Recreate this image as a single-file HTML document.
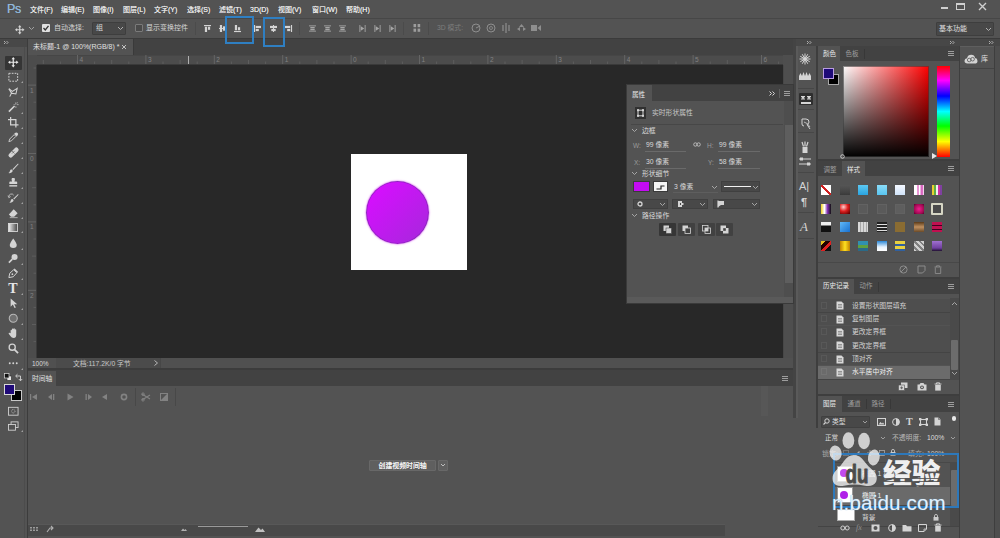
<!DOCTYPE html>
<html lang="zh-CN"><head><meta charset="utf-8"><title>Photoshop</title>
<style>
*{box-sizing:border-box;margin:0;padding:0}
html,body{width:1000px;height:538px;overflow:hidden;background:#535353}
body{position:relative;font-family:"Liberation Sans","Noto Sans CJK SC",sans-serif;font-size:8px;color:#dcdcdc;line-height:1}
.a{position:absolute}
.t{position:absolute;white-space:nowrap;font-size:8px;line-height:10px;color:#d6d6d6}
svg{position:absolute;overflow:visible}
</style></head><body>

<div class="a" style="left:0px;top:0px;width:1000px;height:19px;background:#535353;"></div>
<div class="t" style="left:7px;top:1.7px;font-size:12.5px;color:#8fb5d9;line-height:14px;letter-spacing:-0.3px;text-shadow:0 0 .5px #8fb5d9">Ps</div>
<div class="t" style="left:30px;top:5.4px;font-size:7px;color:#e8e8e8;text-shadow:0 0 .4px #ddd">文件(F)</div>
<div class="t" style="left:61px;top:5.4px;font-size:7px;color:#e8e8e8;text-shadow:0 0 .4px #ddd">编辑(E)</div>
<div class="t" style="left:93px;top:5.4px;font-size:7px;color:#e8e8e8;text-shadow:0 0 .4px #ddd">图像(I)</div>
<div class="t" style="left:123px;top:5.4px;font-size:7px;color:#e8e8e8;text-shadow:0 0 .4px #ddd">图层(L)</div>
<div class="t" style="left:154px;top:5.4px;font-size:7px;color:#e8e8e8;text-shadow:0 0 .4px #ddd">文字(Y)</div>
<div class="t" style="left:187px;top:5.4px;font-size:7px;color:#e8e8e8;text-shadow:0 0 .4px #ddd">选择(S)</div>
<div class="t" style="left:219px;top:5.4px;font-size:7px;color:#e8e8e8;text-shadow:0 0 .4px #ddd">滤镜(T)</div>
<div class="t" style="left:250px;top:5.4px;font-size:7px;color:#e8e8e8;text-shadow:0 0 .4px #ddd">3D(D)</div>
<div class="t" style="left:278px;top:5.4px;font-size:7px;color:#e8e8e8;text-shadow:0 0 .4px #ddd">视图(V)</div>
<div class="t" style="left:312px;top:5.4px;font-size:7px;color:#e8e8e8;text-shadow:0 0 .4px #ddd">窗口(W)</div>
<div class="t" style="left:346px;top:5.4px;font-size:7px;color:#e8e8e8;text-shadow:0 0 .4px #ddd">帮助(H)</div>
<div class="a" style="left:941px;top:7px;width:7px;height:2px;background:#cfcfcf;"></div>
<div class="a" style="left:956px;top:3px;width:9px;height:7px;background:transparent;border:1px solid #cfcfcf;border-top-width:2px;height:6.5px"></div>
<svg style="left:978px;top:2px;" width="9" height="9" viewBox="0 0 9 9"><path d="M1 1L8 8M8 1L1 8" stroke="#cfcfcf" stroke-width="1.4"/></svg>
<div class="a" style="left:0px;top:18px;width:1000px;height:1px;background:#474747;"></div>
<div class="a" style="left:0px;top:19px;width:1000px;height:19px;background:#535353;"></div>
<div class="a" style="left:0px;top:38px;width:1000px;height:1px;background:#3b3b3b;"></div>
<svg style="left:14.5px;top:24.5px" width="9.5" height="9.5" viewBox="0 0 11 11"><path d="M5.5 0L7.5 2.5H6.2V4.8H8.5V3.5L11 5.5L8.5 7.5V6.2H6.2V8.5H7.5L5.5 11L3.5 8.5H4.8V6.2H2.5V7.5L0 5.5L2.5 3.5V4.8H4.8V2.5H3.5Z" fill="#d4d4d4"/></svg>
<svg style="left:29px;top:27px;" width="5" height="3" viewBox="0 0 5 3"><path d="M0 0L2.5 2.5L5 0" stroke="#a0a0a0" fill="none" stroke-width="1"/></svg>
<div class="a" style="left:42px;top:24px;width:8px;height:8px;background:#e0e0e0;border-radius:1px"></div>
<svg style="left:42px;top:24px;" width="8" height="8" viewBox="0 0 8 8"><path d="M1.5 4L3.3 6L6.5 1.8" stroke="#333" fill="none" stroke-width="1.3"/></svg>
<div class="t" style="left:54px;top:23px;font-size:7px;color:#d6d6d6;">自动选择:</div>
<div class="a" style="left:92px;top:22px;width:34px;height:13px;background:#484848;border:1px solid #3e3e3e;border-radius:1px"></div>
<div class="t" style="left:96px;top:23px;font-size:7px;color:#d6d6d6;">组</div>
<svg style="left:118px;top:27px;" width="5" height="3" viewBox="0 0 5 3"><path d="M0 0L2.5 2.5L5 0" stroke="#b0b0b0" fill="none" stroke-width="1"/></svg>
<div class="a" style="left:135px;top:24px;width:8px;height:8px;background:#4a4a4a;border:1px solid #7a7a7a;border-radius:1px"></div>
<div class="t" style="left:146px;top:23px;font-size:7px;color:#d6d6d6;">显示变换控件</div>
<div class="a" style="left:195px;top:22px;width:1px;height:13px;background:#4b4b4b;"></div>
<svg style="left:203.5px;top:25px" width="7" height="7" viewBox="0 0 8 8"><rect x="0" y="0" width="8" height="1.3" fill="#d4d4d4"/><rect x="1" y="2" width="2.5" height="6" fill="#d4d4d4"/><rect x="4.5" y="2" width="2.5" height="3.5" fill="#d4d4d4"/></svg>
<svg style="left:218.5px;top:25px" width="7" height="7" viewBox="0 0 8 8"><rect x="0" y="3.4" width="8" height="1.2" fill="#d4d4d4"/><rect x="1" y="0" width="2.5" height="8" fill="#d4d4d4"/><rect x="4.5" y="1.5" width="2.5" height="5" fill="#d4d4d4"/></svg>
<svg style="left:233.5px;top:25px" width="7" height="7" viewBox="0 0 8 8"><rect x="0" y="6.8" width="8" height="1.3" fill="#d4d4d4"/><rect x="1" y="0" width="2.5" height="6" fill="#d4d4d4"/><rect x="4.5" y="2.5" width="2.5" height="3.5" fill="#d4d4d4"/></svg>
<svg style="left:253.5px;top:25px" width="7" height="7" viewBox="0 0 8 8"><rect x="0" y="0" width="1.3" height="8" fill="#d4d4d4"/><rect x="2" y="1" width="6" height="2.5" fill="#d4d4d4"/><rect x="2" y="4.5" width="3.5" height="2.5" fill="#d4d4d4"/></svg>
<svg style="left:269.5px;top:25px" width="7" height="7" viewBox="0 0 8 8"><rect x="3.4" y="0" width="1.2" height="8" fill="#d4d4d4"/><rect x="0" y="1" width="8" height="2.5" fill="#d4d4d4"/><rect x="1.5" y="4.5" width="5" height="2.5" fill="#d4d4d4"/></svg>
<svg style="left:284.5px;top:25px" width="7" height="7" viewBox="0 0 8 8"><rect x="6.8" y="0" width="1.3" height="8" fill="#d4d4d4"/><rect x="0" y="1" width="6" height="2.5" fill="#d4d4d4"/><rect x="2.5" y="4.5" width="3.5" height="2.5" fill="#d4d4d4"/></svg>
<div class="a" style="left:299px;top:22px;width:1px;height:13px;background:#4b4b4b;"></div>
<svg style="left:308.5px;top:25px" width="7" height="7" viewBox="0 0 8 8"><rect x="0" y="0.5" width="8" height="1" fill="#a6a6a6"/><rect x="0" y="6.5" width="8" height="1" fill="#a6a6a6"/><rect x="1.5" y="2.2" width="5" height="1.6" fill="#a6a6a6"/><rect x="1.5" y="4.4" width="5" height="1.6" fill="#a6a6a6"/></svg>
<svg style="left:323.5px;top:25px" width="7" height="7" viewBox="0 0 8 8"><rect x="0" y="0.5" width="8" height="1" fill="#a6a6a6"/><rect x="0" y="6.5" width="8" height="1" fill="#a6a6a6"/><rect x="1.5" y="2.2" width="5" height="1.6" fill="#a6a6a6"/><rect x="1.5" y="4.4" width="5" height="1.6" fill="#a6a6a6"/></svg>
<svg style="left:338.5px;top:25px" width="7" height="7" viewBox="0 0 8 8"><rect x="0" y="0.5" width="8" height="1" fill="#a6a6a6"/><rect x="0" y="6.5" width="8" height="1" fill="#a6a6a6"/><rect x="1.5" y="2.2" width="5" height="1.6" fill="#a6a6a6"/><rect x="1.5" y="4.4" width="5" height="1.6" fill="#a6a6a6"/></svg>
<svg style="left:358.5px;top:25px" width="7" height="7" viewBox="0 0 8 8"><rect x="0.5" y="0" width="1" height="8" fill="#a6a6a6"/><rect x="6.5" y="0" width="1" height="8" fill="#a6a6a6"/><path d="M2 1.5L6 4L2 6.5Z" fill="#a6a6a6"/></svg>
<svg style="left:373.5px;top:25px" width="7" height="7" viewBox="0 0 8 8"><rect x="0.5" y="0" width="1" height="8" fill="#a6a6a6"/><rect x="6.5" y="0" width="1" height="8" fill="#a6a6a6"/><path d="M2 1.5L6 4L2 6.5Z" fill="#a6a6a6"/></svg>
<svg style="left:388.5px;top:25px" width="7" height="7" viewBox="0 0 8 8"><rect x="0.5" y="0" width="1" height="8" fill="#a6a6a6"/><rect x="6.5" y="0" width="1" height="8" fill="#a6a6a6"/><path d="M2 1.5L6 4L2 6.5Z" fill="#a6a6a6"/></svg>
<div class="a" style="left:403px;top:22px;width:1px;height:13px;background:#4b4b4b;"></div>
<svg style="left:413px;top:24px;" width="8" height="8" viewBox="0 0 8 8"><rect x="0.5" y="0" width="2.6" height="3.2" fill="#9c9c9c"/><rect x="4.6" y="0" width="2.6" height="3.2" fill="#9c9c9c"/><rect x="0.5" y="4.6" width="2.6" height="3.2" fill="#9c9c9c"/><rect x="4.6" y="4.6" width="2.6" height="3.2" fill="#9c9c9c"/></svg>
<div class="a" style="left:428px;top:22px;width:1px;height:13px;background:#4b4b4b;"></div>
<div class="t" style="left:437px;top:23px;font-size:6.8px;color:#7d7d7d;">3D 模式:</div>
<svg style="left:471px;top:23px;" width="10" height="10" viewBox="0 0 10 10"><circle cx="5" cy="5" r="4" fill="none" stroke="#8e8e8e" stroke-width="1"/><path d="M5 5L9 3" stroke="#8e8e8e" stroke-width="1"/></svg>
<svg style="left:486px;top:23px;" width="10" height="10" viewBox="0 0 10 10"><circle cx="5" cy="5" r="4" fill="none" stroke="#8e8e8e" stroke-width="1"/><circle cx="5" cy="5" r="1.5" fill="none" stroke="#8e8e8e" stroke-width="0.8"/></svg>
<svg style="left:501px;top:23px;" width="10" height="10" viewBox="0 0 10 10"><path d="M5 0V10M2 2V8M8 2V8" stroke="#8e8e8e" stroke-width="1.2"/></svg>
<svg style="left:516px;top:23px;" width="11" height="10" viewBox="0 0 11 10"><path d="M5.5 1L8 4H3ZM1 6L4 4V8ZM10 6L7 4V8Z" fill="#8e8e8e"/></svg>
<svg style="left:531px;top:24px;" width="10" height="8" viewBox="0 0 10 8"><rect x="0" y="1" width="6" height="6" fill="#8e8e8e"/><path d="M6.5 4L10 1V7Z" fill="#8e8e8e"/></svg>
<div class="a" style="left:936px;top:22px;width:58px;height:14px;background:#484848;border:1px solid #3e3e3e;border-radius:1px"></div>
<div class="t" style="left:939px;top:24px;font-size:7px;color:#e0e0e0;">基本功能</div>
<svg style="left:986px;top:28px;" width="5" height="3" viewBox="0 0 5 3"><path d="M0 0L2.5 2.5L5 0" stroke="#b0b0b0" fill="none" stroke-width="1"/></svg>
<div class="a" style="left:224.5px;top:16px;width:29px;height:27.5px;background:transparent;border:2px solid #2f7fc2;z-index:50"></div>
<div class="a" style="left:263px;top:17px;width:21.5px;height:29.5px;background:transparent;border:2px solid #2f7fc2;z-index:50"></div><div class="a" style="left:28px;top:39px;width:766px;height:16px;background:#424242;"></div>
<div class="a" style="left:28px;top:39px;width:105px;height:16px;background:#535353;"></div>
<div class="a" style="left:133px;top:39px;width:1px;height:16px;background:#3a3a3a;"></div>
<div class="t" style="left:33px;top:42px;font-size:7px;color:#e0e0e0;">未标题-1 @ 100%(RGB/8) *</div>
<svg style="left:122px;top:45px;" width="4" height="4" viewBox="0 0 4 4"><path d="M0 0L4 4M4 0L0 4" stroke="#c0c0c0" stroke-width="1"/></svg>
<div class="a" style="left:28px;top:55px;width:766px;height:10px;background:#4c4c4c;"></div>
<div class="a" style="left:28px;top:55px;width:766px;height:1px;background:#464646;"></div>
<div class="a" style="left:28px;top:64px;width:766px;height:1px;background:#3a3a3a;"></div>
<div class="a" style="left:28px;top:55px;width:9px;height:303px;background:#4c4c4c;"></div>
<div class="a" style="left:36px;top:65px;width:1px;height:293px;background:#3a3a3a;"></div>
<svg style="left:28px;top:55px;font-family:'Liberation Sans',sans-serif" width="766" height="10" viewBox="0 0 766 10"><rect x="14.8" y="5" width="1" height="4" fill="#5e5e5e"/><rect x="31.9" y="6.5" width="1" height="2.5" fill="#5e5e5e"/><rect x="49.0" y="0" width="1" height="9" fill="#656565"/><text x="51.5" y="6.5" font-size="6.5" fill="#828282">4</text><rect x="66.1" y="6.5" width="1" height="2.5" fill="#5e5e5e"/><rect x="83.2" y="5" width="1" height="4" fill="#5e5e5e"/><rect x="100.3" y="6.5" width="1" height="2.5" fill="#5e5e5e"/><rect x="117.4" y="0" width="1" height="9" fill="#656565"/><text x="119.9" y="6.5" font-size="6.5" fill="#828282">3</text><rect x="134.5" y="6.5" width="1" height="2.5" fill="#5e5e5e"/><rect x="151.6" y="5" width="1" height="4" fill="#5e5e5e"/><rect x="168.7" y="6.5" width="1" height="2.5" fill="#5e5e5e"/><rect x="185.8" y="0" width="1" height="9" fill="#656565"/><text x="188.3" y="6.5" font-size="6.5" fill="#828282">2</text><rect x="202.9" y="6.5" width="1" height="2.5" fill="#5e5e5e"/><rect x="220.0" y="5" width="1" height="4" fill="#5e5e5e"/><rect x="237.1" y="6.5" width="1" height="2.5" fill="#5e5e5e"/><rect x="254.2" y="0" width="1" height="9" fill="#656565"/><text x="256.7" y="6.5" font-size="6.5" fill="#828282">1</text><rect x="271.3" y="6.5" width="1" height="2.5" fill="#5e5e5e"/><rect x="288.4" y="5" width="1" height="4" fill="#5e5e5e"/><rect x="305.5" y="6.5" width="1" height="2.5" fill="#5e5e5e"/><rect x="322.6" y="0" width="1" height="9" fill="#656565"/><text x="325.1" y="6.5" font-size="6.5" fill="#828282">0</text><rect x="339.7" y="6.5" width="1" height="2.5" fill="#5e5e5e"/><rect x="356.8" y="5" width="1" height="4" fill="#5e5e5e"/><rect x="373.9" y="6.5" width="1" height="2.5" fill="#5e5e5e"/><rect x="391.0" y="0" width="1" height="9" fill="#656565"/><text x="393.5" y="6.5" font-size="6.5" fill="#828282">1</text><rect x="408.1" y="6.5" width="1" height="2.5" fill="#5e5e5e"/><rect x="425.2" y="5" width="1" height="4" fill="#5e5e5e"/><rect x="442.3" y="6.5" width="1" height="2.5" fill="#5e5e5e"/><rect x="459.4" y="0" width="1" height="9" fill="#656565"/><text x="461.9" y="6.5" font-size="6.5" fill="#828282">2</text><rect x="476.5" y="6.5" width="1" height="2.5" fill="#5e5e5e"/><rect x="493.6" y="5" width="1" height="4" fill="#5e5e5e"/><rect x="510.7" y="6.5" width="1" height="2.5" fill="#5e5e5e"/><rect x="527.8" y="0" width="1" height="9" fill="#656565"/><text x="530.3" y="6.5" font-size="6.5" fill="#828282">3</text><rect x="544.9" y="6.5" width="1" height="2.5" fill="#5e5e5e"/><rect x="562.0" y="5" width="1" height="4" fill="#5e5e5e"/><rect x="579.1" y="6.5" width="1" height="2.5" fill="#5e5e5e"/><rect x="596.2" y="0" width="1" height="9" fill="#656565"/><text x="598.7" y="6.5" font-size="6.5" fill="#828282">4</text><rect x="613.3" y="6.5" width="1" height="2.5" fill="#5e5e5e"/><rect x="630.4" y="5" width="1" height="4" fill="#5e5e5e"/><rect x="647.5" y="6.5" width="1" height="2.5" fill="#5e5e5e"/><rect x="664.6" y="0" width="1" height="9" fill="#656565"/><text x="667.1" y="6.5" font-size="6.5" fill="#828282">5</text><rect x="681.7" y="6.5" width="1" height="2.5" fill="#5e5e5e"/><rect x="698.8" y="5" width="1" height="4" fill="#5e5e5e"/><rect x="715.9" y="6.5" width="1" height="2.5" fill="#5e5e5e"/><rect x="733.0" y="0" width="1" height="9" fill="#656565"/><text x="735.5" y="6.5" font-size="6.5" fill="#828282">6</text><rect x="750.1" y="6.5" width="1" height="2.5" fill="#5e5e5e"/></svg>
<div class="a" style="left:188px;top:56px;width:1px;height:8px;background:#b0b0b0;"></div>
<svg style="left:28px;top:55px;font-family:'Liberation Sans',sans-serif" width="9" height="303" viewBox="0 0 9 303"><rect x="5.5" y="12.5" width="2.5" height="1" fill="#5e5e5e"/><rect x="0" y="29.6" width="8" height="1" fill="#656565"/><text x="2" y="37.6" font-size="6.5" fill="#828282">1</text><rect x="5.5" y="46.7" width="2.5" height="1" fill="#5e5e5e"/><rect x="4" y="63.8" width="4" height="1" fill="#5e5e5e"/><rect x="5.5" y="80.9" width="2.5" height="1" fill="#5e5e5e"/><rect x="0" y="98.0" width="8" height="1" fill="#656565"/><text x="2" y="106.0" font-size="6.5" fill="#828282">0</text><rect x="5.5" y="115.1" width="2.5" height="1" fill="#5e5e5e"/><rect x="4" y="132.2" width="4" height="1" fill="#5e5e5e"/><rect x="5.5" y="149.3" width="2.5" height="1" fill="#5e5e5e"/><rect x="0" y="166.4" width="8" height="1" fill="#656565"/><text x="2" y="174.4" font-size="6.5" fill="#828282">1</text><rect x="5.5" y="183.5" width="2.5" height="1" fill="#5e5e5e"/><rect x="4" y="200.6" width="4" height="1" fill="#5e5e5e"/><rect x="5.5" y="217.7" width="2.5" height="1" fill="#5e5e5e"/><rect x="0" y="234.8" width="8" height="1" fill="#656565"/><text x="2" y="242.8" font-size="6.5" fill="#828282">2</text><rect x="5.5" y="251.9" width="2.5" height="1" fill="#5e5e5e"/><rect x="4" y="269.0" width="4" height="1" fill="#5e5e5e"/><rect x="5.5" y="286.1" width="2.5" height="1" fill="#5e5e5e"/></svg>
<div class="a" style="left:37px;top:65px;width:746px;height:293px;background:#282828;"></div>
<div class="a" style="left:351px;top:153.5px;width:116px;height:116px;background:#ffffff;"></div>
<div class="a" style="left:365.8px;top:180.8px;width:63.5px;height:63.5px;background:linear-gradient(135deg,#d40ffd 15%,#ac25e0 88%);border-radius:50%;border:1px solid rgba(120,35,170,.6);box-shadow:0 0 1.5px 0.5px rgba(225,120,245,.9)"></div>
<div class="a" style="left:783px;top:55px;width:11px;height:303px;background:#4e4e4e;"></div>
<div class="a" style="left:783px;top:65px;width:1px;height:293px;background:#474747;"></div>
<div class="a" style="left:28px;top:358px;width:766px;height:10px;background:#505050;"></div>
<div class="a" style="left:56px;top:358px;width:104px;height:10px;background:#4b4b4b;"></div>
<div class="t" style="left:32px;top:359px;font-size:6.5px;color:#d8d8d8;">100%</div>
<div class="t" style="left:73px;top:359px;font-size:6.8px;color:#c8c8c8;">文档:117.2K/0 字节</div>
<svg style="left:154px;top:360px;" width="4" height="6" viewBox="0 0 4 6"><path d="M0.5 0.5L3.5 3L0.5 5.5" stroke="#b8b8b8" fill="none" stroke-width="1"/></svg>
<div class="a" style="left:160px;top:358px;width:1px;height:10px;background:#474747;"></div>
<div class="a" style="left:28px;top:368px;width:766px;height:18px;background:#424242;"></div>
<div class="a" style="left:28px;top:368px;width:766px;height:2px;background:#3c3c3c;"></div>
<div class="a" style="left:28px;top:370.5px;width:28px;height:16px;background:#535353;"></div>
<div class="t" style="left:32px;top:374px;font-size:6.8px;color:#e0e0e0;">时间轴</div>
<svg style="left:782px;top:376px;" width="6" height="5" viewBox="0 0 6 5"><path d="M0 0.5H6M0 2.5H6M0 4.5H6" stroke="#a8a8a8" stroke-width="0.9"/></svg>
<div class="a" style="left:28px;top:386px;width:766px;height:152px;background:#535353;"></div>
<div class="a" style="left:761px;top:386px;width:7px;height:30px;background:#575757;"></div>
<svg style="left:29px;top:392px;" width="10" height="10" viewBox="0 0 10 10"><rect x="1" y="2" width="1.2" height="6" fill="#828282"/><path d="M8 2L3 5L8 8Z" fill="#828282"/></svg>
<svg style="left:47px;top:392px;" width="10" height="10" viewBox="0 0 10 10"><path d="M5 2L1 5L5 8Z" fill="#828282"/><rect x="6" y="2" width="1.3" height="6" fill="#828282"/></svg>
<svg style="left:65px;top:392px;" width="10" height="10" viewBox="0 0 10 10"><path d="M2.5 1.5L8.5 5L2.5 8.5Z" fill="#828282"/></svg>
<svg style="left:83px;top:392px;" width="10" height="10" viewBox="0 0 10 10"><rect x="2.5" y="2" width="1.3" height="6" fill="#828282"/><path d="M5 2L9 5L5 8Z" fill="#828282"/></svg>
<svg style="left:100px;top:392px;" width="10" height="10" viewBox="0 0 10 10"><path d="M7 2L2 5L7 8Z" fill="#828282"/></svg>
<svg style="left:119px;top:392px;" width="10" height="10" viewBox="0 0 10 10"><circle cx="5" cy="5" r="2.6" fill="none" stroke="#828282" stroke-width="1.6"/></svg>
<div class="a" style="left:135px;top:388px;width:1px;height:18px;background:#484848;"></div>
<svg style="left:141px;top:392px;" width="10" height="10" viewBox="0 0 10 10"><path d="M1 2L9 7M1 8L9 3" stroke="#828282" stroke-width="1.1"/><circle cx="2" cy="2.2" r="1.3" fill="none" stroke="#828282" stroke-width="0.9"/><circle cx="2" cy="7.8" r="1.3" fill="none" stroke="#828282" stroke-width="0.9"/></svg>
<svg style="left:159px;top:392px;" width="10" height="10" viewBox="0 0 10 10"><rect x="1.5" y="1.5" width="7" height="7" fill="none" stroke="#828282" stroke-width="1"/><path d="M8.5 1.5V8.5H1.5Z" fill="#828282"/></svg>
<div class="a" style="left:175px;top:388px;width:1px;height:18px;background:#484848;"></div>
<div class="a" style="left:369px;top:460px;width:67px;height:11px;background:#5f5f5f;border:1px solid #686868;border-radius:1px"></div>
<div class="t" style="left:378.5px;top:461px;font-size:6.9px;color:#f6f6f6;text-shadow:0 0 .6px #fff">创建视频时间轴</div>
<div class="a" style="left:438px;top:460px;width:10px;height:11px;background:#5f5f5f;border:1px solid #686868;border-radius:1px"></div>
<svg style="left:441px;top:464px;" width="4" height="3" viewBox="0 0 4 3"><path d="M0 0L2 2L4 0" stroke="#c8c8c8" fill="none" stroke-width="0.9"/></svg>
<div class="a" style="left:28px;top:524px;width:697px;height:12px;background:#494949;"></div>
<div class="a" style="left:28px;top:523.5px;width:697px;height:0.8px;background:#585858;"></div>
<svg style="left:30px;top:527px;" width="10" height="5" viewBox="0 0 10 5"><rect x="0" y="0" width="2" height="1.5" fill="#9a9a9a"/><rect x="3" y="0" width="2" height="1.5" fill="#9a9a9a"/><rect x="6" y="0" width="2" height="1.5" fill="#9a9a9a"/><rect x="0" y="2.5" width="2" height="1.5" fill="#9a9a9a"/><rect x="3" y="2.5" width="2" height="1.5" fill="#9a9a9a"/><rect x="6" y="2.5" width="2" height="1.5" fill="#9a9a9a"/></svg>
<svg style="left:46px;top:525px;" width="8" height="8" viewBox="0 0 8 8"><path d="M1 7L4 3L7 3M5 1L7 3L5 5" stroke="#b0b0b0" fill="none" stroke-width="1.1"/></svg>
<svg style="left:181px;top:528px;" width="6" height="3" viewBox="0 0 6 3"><path d="M0 3L2 0.5L3.5 2L4.5 1L6 3Z" fill="#b0b0b0"/></svg>
<div class="a" style="left:198px;top:526px;width:50px;height:1px;background:#9a9a9a;"></div>
<svg style="left:255px;top:527px;" width="10" height="5" viewBox="0 0 10 5"><path d="M0 5L3.5 0.5L6 3L7.5 1.5L10 5Z" fill="#c0c0c0"/></svg><div class="a" style="left:0px;top:39px;width:28px;height:499px;background:#535353;"></div>
<div class="a" style="left:27px;top:39px;width:1px;height:499px;background:#3c3c3c;"></div>
<div class="a" style="left:24px;top:47px;width:1px;height:491px;background:#4c4c4c;"></div>
<div class="a" style="left:0px;top:39px;width:27px;height:8px;background:#484848;"></div>
<svg style="left:4px;top:41px;" width="5" height="3" viewBox="0 0 5 3"><path d="M0 0L1.5 1.5L0 3M2.5 0L4 1.5L2.5 3" stroke="#c8c8c8" fill="none" stroke-width="0.8"/></svg>
<div class="a" style="left:5px;top:56px;width:17px;height:13.5px;background:#353535;border-radius:1px"></div>
<svg style="left:7.75px;top:56.75px" width="10.5" height="10.5" viewBox="0 0 12 12"><path d="M6 0L8 2.6H6.7V5.3H9.4V4L12 6L9.4 8V6.7H6.7V9.4H8L6 12L4 9.4H5.3V6.7H2.6V8L0 6L2.6 4V5.3H5.3V2.6H4Z" fill="#eaeaea"/></svg>
<svg style="left:7.75px;top:71.75px" width="10.5" height="10.5" viewBox="0 0 12 12"><rect x="1" y="1.5" width="10" height="9" fill="none" stroke="#d4d4d4" stroke-width="1.1" stroke-dasharray="2 1.3"/></svg>
<svg style="left:7.75px;top:86.75px" width="10.5" height="10.5" viewBox="0 0 12 12"><path d="M1 2L5 5L10.5 1.5L9 8L4 7L2 11" fill="none" stroke="#d4d4d4" stroke-width="1.2"/><path d="M1 2L4 7" stroke="#d4d4d4" stroke-width="1.2"/></svg>
<svg style="left:7.75px;top:102.25px" width="10.5" height="10.5" viewBox="0 0 12 12"><path d="M1 11L7.5 4.5" stroke="#d4d4d4" stroke-width="1.8"/><path d="M9 0.5V3M9 5V6.5M6.5 3H7.5M10.5 3H12M10.5 1.2L11.3 0.5" stroke="#d4d4d4" stroke-width="0.9"/></svg>
<svg style="left:7.75px;top:117.25px" width="10.5" height="10.5" viewBox="0 0 12 12"><path d="M3 0V9H12M0 3H9V12" fill="none" stroke="#d4d4d4" stroke-width="1.4"/></svg>
<svg style="left:7.75px;top:132.25px" width="10.5" height="10.5" viewBox="0 0 12 12"><path d="M1 11L2 8L7 3L9 5L4 10Z" fill="none" stroke="#d4d4d4" stroke-width="1"/><path d="M7 2L8.5 0.8Q10 0 11 1Q12 2 11.2 3.5L10 5Z" fill="#d4d4d4"/></svg>
<svg style="left:7.75px;top:147.25px" width="10.5" height="10.5" viewBox="0 0 12 12"><rect x="-1" y="4" width="14" height="5" rx="2.2" transform="rotate(-45 6 6)" fill="#d4d4d4"/><path d="M4.5 4.5L7.5 7.5M7.5 4.5L4.5 7.5" stroke="#535353" stroke-width="0.7"/></svg>
<svg style="left:7.75px;top:162.75px" width="10.5" height="10.5" viewBox="0 0 12 12"><path d="M11.5 0.5L5 7L6 8L12 1.5Z" fill="#d4d4d4"/><path d="M4.5 7.5Q6 8.5 5 10Q3.5 12 0.5 11.5Q2 10.5 2.2 9Q2.6 7.2 4.5 7.5Z" fill="#d4d4d4"/></svg>
<svg style="left:7.75px;top:177.25px" width="10.5" height="10.5" viewBox="0 0 12 12"><path d="M4.5 1H7.5Q8.5 3 7.3 5H9.5Q10.5 5 10.5 6V8H1.5V6Q1.5 5 2.5 5H4.7Q3.5 3 4.5 1Z" fill="#d4d4d4"/><rect x="1.5" y="9.3" width="9" height="1.6" fill="#d4d4d4"/></svg>
<svg style="left:7.75px;top:192.75px" width="10.5" height="10.5" viewBox="0 0 12 12"><path d="M11.5 1L6 6.5L7 7.5L12 2Z" fill="#d4d4d4"/><path d="M5.5 7Q7 8 6 9.5Q4.5 11.5 1.5 11Q3 10 3.2 8.5Q3.6 6.7 5.5 7Z" fill="#d4d4d4"/><path d="M1 4.5A3 3 0 0 1 6.5 2.5" fill="none" stroke="#d4d4d4" stroke-width="0.9"/><path d="M0 3L1 5.5L3 4" fill="none" stroke="#d4d4d4" stroke-width="0.8"/></svg>
<svg style="left:7.75px;top:207.75px" width="10.5" height="10.5" viewBox="0 0 12 12"><path d="M6.5 1.5L11 6L7 10H3.5L1 7.5Z" fill="#d4d4d4"/><path d="M2 11H11" stroke="#d4d4d4" stroke-width="0.8"/></svg>
<svg style="left:8px;top:223px" width="10" height="9" viewBox="0 0 12 11"><defs><linearGradient id="gr1" x1="0" x2="1" y1="0" y2="0"><stop offset="0" stop-color="#f0f0f0"/><stop offset="1" stop-color="#444"/></linearGradient></defs><rect x="0.5" y="0.5" width="11" height="10" fill="url(#gr1)" stroke="#e0e0e0" stroke-width="1"/></svg>
<svg style="left:7.75px;top:238.25px" width="10.5" height="10.5" viewBox="0 0 12 12"><path d="M6 0.5Q10 6 10 8Q10 11.5 6 11.5Q2 11.5 2 8Q2 6 6 0.5Z" fill="#d4d4d4"/></svg>
<svg style="left:7.75px;top:253.25px" width="10.5" height="10.5" viewBox="0 0 12 12"><circle cx="7.5" cy="4.5" r="3.5" fill="#d4d4d4"/><path d="M5 7L1 11" stroke="#d4d4d4" stroke-width="1.8"/></svg>
<svg style="left:7.75px;top:268.25px" width="10.5" height="10.5" viewBox="0 0 12 12"><path d="M1 11L2 6L6.5 2L10 5.5L6 10Z" fill="none" stroke="#d4d4d4" stroke-width="1.1"/><path d="M7 1L11 5" stroke="#d4d4d4" stroke-width="1.6"/><circle cx="5" cy="7" r="1" fill="#d4d4d4"/></svg>
<div class="t" style="left:8px;top:281px;width:10px;text-align:center;font-family:'Liberation Serif',serif;font-size:14px;line-height:15px;color:#e6e6e6;font-weight:bold">T</div>
<svg style="left:7.75px;top:298.25px" width="10.5" height="10.5" viewBox="0 0 12 12"><path d="M3 0.5L3 10L5.5 7.5L7.5 11.5L9 10.8L7 7L10.5 7Z" fill="#d4d4d4"/></svg>
<svg style="left:7.75px;top:313.25px" width="10.5" height="10.5" viewBox="0 0 12 12"><circle cx="6" cy="6" r="4.6" fill="#707070" stroke="#b8b8b8" stroke-width="1.2"/></svg>
<svg style="left:7.75px;top:328.25px" width="10.5" height="10.5" viewBox="0 0 12 12"><path d="M3 6V3Q3 2 3.8 2Q4.5 2 4.5 3V1.5Q4.5 0.5 5.3 0.5Q6.2 0.5 6.2 1.5V1Q6.2 0.3 7 0.3Q7.8 0.3 7.8 1.2V2Q7.8 1.3 8.6 1.3Q9.4 1.3 9.4 2.3V8Q9.4 11.5 6.5 11.5Q4 11.5 3 9.5L0.8 6.5Q0.5 5.5 1.5 5.3Q2.3 5.2 3 6Z" fill="#d4d4d4"/></svg>
<svg style="left:7.75px;top:343.25px" width="10.5" height="10.5" viewBox="0 0 12 12"><circle cx="4.8" cy="4.8" r="3.5" fill="none" stroke="#d4d4d4" stroke-width="1.5"/><path d="M7.5 7.5L11.5 11.5" stroke="#d4d4d4" stroke-width="2"/></svg>
<svg style="left:7.75px;top:358.25px" width="10.5" height="10.5" viewBox="0 0 12 12"><circle cx="2" cy="6" r="1.1" fill="#d4d4d4"/><circle cx="6" cy="6" r="1.1" fill="#d4d4d4"/><circle cx="10" cy="6" r="1.1" fill="#d4d4d4"/></svg>
<svg style="left:21px;top:81px;" width="2" height="2" viewBox="0 0 2 2"><path d="M2 0V2H0Z" fill="#a0a0a0"/></svg>
<svg style="left:21px;top:96px;" width="2" height="2" viewBox="0 0 2 2"><path d="M2 0V2H0Z" fill="#a0a0a0"/></svg>
<svg style="left:21px;top:111.5px;" width="2" height="2" viewBox="0 0 2 2"><path d="M2 0V2H0Z" fill="#a0a0a0"/></svg>
<svg style="left:21px;top:126.5px;" width="2" height="2" viewBox="0 0 2 2"><path d="M2 0V2H0Z" fill="#a0a0a0"/></svg>
<svg style="left:21px;top:141.5px;" width="2" height="2" viewBox="0 0 2 2"><path d="M2 0V2H0Z" fill="#a0a0a0"/></svg>
<svg style="left:21px;top:156.5px;" width="2" height="2" viewBox="0 0 2 2"><path d="M2 0V2H0Z" fill="#a0a0a0"/></svg>
<svg style="left:21px;top:172px;" width="2" height="2" viewBox="0 0 2 2"><path d="M2 0V2H0Z" fill="#a0a0a0"/></svg>
<svg style="left:21px;top:186.5px;" width="2" height="2" viewBox="0 0 2 2"><path d="M2 0V2H0Z" fill="#a0a0a0"/></svg>
<svg style="left:21px;top:202px;" width="2" height="2" viewBox="0 0 2 2"><path d="M2 0V2H0Z" fill="#a0a0a0"/></svg>
<svg style="left:21px;top:217px;" width="2" height="2" viewBox="0 0 2 2"><path d="M2 0V2H0Z" fill="#a0a0a0"/></svg>
<svg style="left:21px;top:231px;" width="2" height="2" viewBox="0 0 2 2"><path d="M2 0V2H0Z" fill="#a0a0a0"/></svg>
<svg style="left:21px;top:247.5px;" width="2" height="2" viewBox="0 0 2 2"><path d="M2 0V2H0Z" fill="#a0a0a0"/></svg>
<svg style="left:21px;top:262.5px;" width="2" height="2" viewBox="0 0 2 2"><path d="M2 0V2H0Z" fill="#a0a0a0"/></svg>
<svg style="left:21px;top:277.5px;" width="2" height="2" viewBox="0 0 2 2"><path d="M2 0V2H0Z" fill="#a0a0a0"/></svg>
<svg style="left:21px;top:292.5px;" width="2" height="2" viewBox="0 0 2 2"><path d="M2 0V2H0Z" fill="#a0a0a0"/></svg>
<svg style="left:21px;top:307.5px;" width="2" height="2" viewBox="0 0 2 2"><path d="M2 0V2H0Z" fill="#a0a0a0"/></svg>
<svg style="left:21px;top:322.5px;" width="2" height="2" viewBox="0 0 2 2"><path d="M2 0V2H0Z" fill="#a0a0a0"/></svg>
<svg style="left:21px;top:337.5px;" width="2" height="2" viewBox="0 0 2 2"><path d="M2 0V2H0Z" fill="#a0a0a0"/></svg>
<svg style="left:21px;top:367.5px;" width="2" height="2" viewBox="0 0 2 2"><path d="M2 0V2H0Z" fill="#a0a0a0"/></svg>
<svg style="left:21px;top:430px;" width="2" height="2" viewBox="0 0 2 2"><path d="M2 0V2H0Z" fill="#a0a0a0"/></svg>
<svg style="left:4px;top:373px;" width="8" height="8" viewBox="0 0 8 8"><rect x="3" y="3" width="4.5" height="4.5" fill="#e8e8e8" stroke="#222" stroke-width="0.6"/><rect x="0.5" y="0.5" width="4.5" height="4.5" fill="#111" stroke="#ddd" stroke-width="0.7"/></svg>
<svg style="left:15px;top:373px;" width="8" height="8" viewBox="0 0 8 8"><path d="M1 3H5.5V7.5" fill="none" stroke="#d4d4d4" stroke-width="0.9"/><path d="M2.5 1.2L0.6 3L2.5 4.8M3.8 6L5.5 7.8L7.2 6" fill="none" stroke="#d4d4d4" stroke-width="0.9"/></svg>
<div class="a" style="left:11px;top:390px;width:11px;height:11px;background:#000000;border:1px solid #c8c8c8"></div>
<div class="a" style="left:4px;top:384px;width:11px;height:11px;background:#1f0a78;border:1px solid #d8d8d8"></div>
<svg style="left:7.75px;top:406.25px" width="10.5" height="10.5" viewBox="0 0 12 12"><rect x="0.5" y="1.5" width="11" height="9" fill="none" stroke="#d4d4d4" stroke-width="1"/><circle cx="6" cy="6" r="2" fill="none" stroke="#d4d4d4" stroke-width="0.8" stroke-dasharray="1 0.8"/></svg>
<svg style="left:7.75px;top:420.75px" width="10.5" height="10.5" viewBox="0 0 12 12"><rect x="3.5" y="1" width="8" height="6.5" fill="none" stroke="#d4d4d4" stroke-width="1"/><rect x="0.5" y="4" width="8" height="6.5" fill="#535353" stroke="#d4d4d4" stroke-width="1"/></svg><div class="a" style="left:794px;top:39px;width:206px;height:499px;background:#484848;"></div>
<div class="a" style="left:794px;top:39px;width:206px;height:7px;background:#474747;"></div>
<div class="a" style="left:794px;top:418px;width:24px;height:120px;background:#535353;"></div>
<div class="a" style="left:793px;top:39px;width:3.2px;height:379px;background:#444444;"></div>
<div class="a" style="left:796.2px;top:46px;width:1.5px;height:372px;background:#5a5a5a;z-index:2"></div>
<svg style="left:807px;top:41px;" width="5" height="3" viewBox="0 0 5 3"><path d="M0 0L1.5 1.5L0 3M2.5 0L4 1.5L2.5 3" stroke="#c8c8c8" fill="none" stroke-width="0.8"/></svg>
<svg style="left:950px;top:41px;" width="5" height="3" viewBox="0 0 5 3"><path d="M0 0L1.5 1.5L0 3M2.5 0L4 1.5L2.5 3" stroke="#c8c8c8" fill="none" stroke-width="0.8"/></svg>
<svg style="left:989px;top:41px;" width="5" height="3" viewBox="0 0 5 3"><path d="M0 0L1.5 1.5L0 3M2.5 0L4 1.5L2.5 3" stroke="#c8c8c8" fill="none" stroke-width="0.8"/></svg>
<div class="a" style="left:796px;top:46px;width:20px;height:372px;background:#535353;"></div>
<div class="a" style="left:816px;top:46px;width:2px;height:382px;background:#3e3e3e;"></div>
<svg style="left:799.0px;top:53.0px;" width="12" height="12" viewBox="0 0 12 12"><path d="M6 6L11.50 6.00" stroke="#d4d4d4" stroke-width="1"/><path d="M6 6L10.76 8.75" stroke="#d4d4d4" stroke-width="1"/><path d="M6 6L8.75 10.76" stroke="#d4d4d4" stroke-width="1"/><path d="M6 6L6.00 11.50" stroke="#d4d4d4" stroke-width="1"/><path d="M6 6L3.25 10.76" stroke="#d4d4d4" stroke-width="1"/><path d="M6 6L1.24 8.75" stroke="#d4d4d4" stroke-width="1"/><path d="M6 6L0.50 6.00" stroke="#d4d4d4" stroke-width="1"/><path d="M6 6L1.24 3.25" stroke="#d4d4d4" stroke-width="1"/><path d="M6 6L3.25 1.24" stroke="#d4d4d4" stroke-width="1"/><path d="M6 6L6.00 0.50" stroke="#d4d4d4" stroke-width="1"/><path d="M6 6L8.75 1.24" stroke="#d4d4d4" stroke-width="1"/><path d="M6 6L10.76 3.25" stroke="#d4d4d4" stroke-width="1"/><circle cx="6" cy="6" r="1.8" fill="#d4d4d4"/></svg>
<svg style="left:799.0px;top:69.5px;" width="12" height="12" viewBox="0 0 12 12"><path d="M0 10V6L1.5 3L3 6L4.5 2L6 6L7.5 2L9 6L10.5 3L12 6V10Z" fill="#d4d4d4"/></svg>
<div class="a" style="left:798px;top:88px;width:16px;height:1px;background:#474747;"></div>
<div class="a" style="left:799px;top:93px;width:14px;height:12px;background:#2e2e2e;border-radius:1px"></div>
<svg style="left:800.0px;top:93.5px;" width="12" height="12" viewBox="0 0 12 12"><path d="M1 2.5H5M7 2.5H11M1 5H5M7 5H11" stroke="#d4d4d4" stroke-width="1"/><circle cx="3" cy="3.6" r="1.3" fill="#d4d4d4"/><circle cx="9" cy="3.6" r="1.3" fill="#d4d4d4"/><rect x="1" y="8" width="10" height="2" fill="#d4d4d4"/></svg>
<div class="a" style="left:798px;top:109px;width:16px;height:1px;background:#474747;"></div>
<svg style="left:799.5px;top:117.5px;" width="13" height="13" viewBox="0 0 13 13"><path d="M2 1H6Q9 1 9 4Q9 6 7 6.5L10 11M2 1V6Q2 8 4 8" fill="none" stroke="#d4d4d4" stroke-width="1"/><path d="M4 4Q8 5 10 9" fill="none" stroke="#d4d4d4" stroke-width="0.8"/></svg>
<div class="a" style="left:798px;top:132px;width:16px;height:1px;background:#474747;"></div>
<svg style="left:799.0px;top:141.0px;" width="12" height="12" viewBox="0 0 12 12"><rect x="3.5" y="6" width="5" height="6" fill="#d4d4d4"/><path d="M4.5 5.5L3 1M6 5.5V0.5M7.5 5.5L9 1" stroke="#d4d4d4" stroke-width="1.2"/></svg>
<svg style="left:799.0px;top:156.0px;" width="12" height="12" viewBox="0 0 12 12"><path d="M0 3H12M0 8H12" stroke="#d4d4d4" stroke-width="1"/><rect x="1" y="1.5" width="3" height="3" fill="#d4d4d4"/><rect x="8" y="6.5" width="3" height="3" fill="#d4d4d4"/></svg>
<div class="a" style="left:798px;top:172px;width:16px;height:1px;background:#474747;"></div>
<div class="t" style="left:799px;top:180px;font-size:11px;line-height:12px;color:#d4d4d4">A|</div>
<div class="t" style="left:801px;top:196px;font-size:11px;line-height:12px;color:#d4d4d4;font-weight:bold">¶</div>
<div class="a" style="left:798px;top:212px;width:16px;height:1px;background:#474747;"></div>
<div class="a" style="left:798px;top:238px;width:16px;height:1px;background:#474747;"></div>
<div class="t" style="left:800px;top:220px;font-size:13px;line-height:14px;color:#d4d4d4;font-family:'Liberation Serif',serif;font-style:italic">A</div>
<div class="a" style="left:959px;top:46px;width:1px;height:492px;background:#3e3e3e;"></div>
<div class="a" style="left:960px;top:46px;width:34px;height:492px;background:#535353;"></div>
<div class="a" style="left:960px;top:46px;width:34px;height:1px;background:#5e5e5e;"></div>
<div class="a" style="left:960px;top:68px;width:34px;height:1px;background:#444444;"></div>
<div class="a" style="left:994px;top:46px;width:1px;height:492px;background:#3e3e3e;"></div>
<div class="a" style="left:995px;top:46px;width:5px;height:492px;background:#4e4e4e;"></div>
<svg style="left:964px;top:54px;" width="14" height="10" viewBox="0 0 14 10"><path d="M3.5 9.5Q0.5 9.5 0.5 6.8Q0.5 4.5 3 4.2Q3.8 0.8 7.3 0.8Q10.5 0.8 11 4Q13.5 4.3 13.5 6.9Q13.5 9.5 10.5 9.5Z" fill="#d4d4d4"/><circle cx="5.2" cy="6" r="1.8" fill="none" stroke="#555" stroke-width="0.8"/><circle cx="8.6" cy="5.2" r="1.8" fill="none" stroke="#555" stroke-width="0.8"/></svg>
<div class="t" style="left:981px;top:54px;font-size:7px;color:#e0e0e0;">库</div>
<div class="a" style="left:818px;top:45.5px;width:141px;height:15.5px;background:#424242;"></div>
<div class="a" style="left:818px;top:61.0px;width:141px;height:98.0px;background:#535353;"></div>
<div class="a" style="left:818px;top:45.5px;width:22px;height:15.5px;background:#535353;"></div>
<div class="t" style="left:823px;top:49.2px;font-size:6.5px;color:#ececec;">颜色</div>
<div class="t" style="left:845.5px;top:49.2px;font-size:6.5px;color:#9e9e9e;">色板</div>
<div class="a" style="left:864px;top:48.5px;width:1px;height:10px;background:#383838;"></div>
<svg style="left:948px;top:51.0px;" width="6" height="5" viewBox="0 0 6 5"><path d="M0 0.5H6M0 2.5H6M0 4.5H6" stroke="#a8a8a8" stroke-width="0.9"/></svg>
<div class="a" style="left:828px;top:74px;width:11px;height:11px;background:#000;border:1px solid #a8a8a8"></div>
<div class="a" style="left:823px;top:68px;width:11px;height:11px;background:#1e0a78;border:1px solid #b89be0"></div>
<div class="a" style="left:843px;top:65.5px;width:85.5px;height:91px;background:linear-gradient(to bottom,rgba(0,0,0,0),#000),linear-gradient(to right,#fff,#ff0000);"></div>
<div class="a" style="left:843px;top:65.5px;width:85.5px;height:91px;background:transparent;border:1px solid rgba(60,60,60,.6)"></div>
<svg style="left:840px;top:154px;" width="5" height="5" viewBox="0 0 5 5"><circle cx="2.5" cy="2.5" r="1.8" fill="none" stroke="#ddd" stroke-width="0.8"/></svg>
<div class="a" style="left:937px;top:65.5px;width:13px;height:91px;background:linear-gradient(to bottom,#ff0000 0%,#ff00ff 16%,#0000ff 33%,#00ffff 50%,#00ff00 66%,#ffff00 83%,#ff0000 100%);"></div>
<svg style="left:932px;top:153px;" width="5" height="6" viewBox="0 0 5 6"><path d="M0 0L5 3L0 6Z" fill="#e8e8e8"/></svg>
<div class="a" style="left:818px;top:159px;width:141px;height:2px;background:#3e3e3e;"></div><div class="a" style="left:818px;top:160.5px;width:141px;height:15.5px;background:#424242;"></div>
<div class="a" style="left:818px;top:176.0px;width:141px;height:101.0px;background:#535353;"></div>
<div class="t" style="left:823.5px;top:165px;font-size:6.5px;color:#9e9e9e;">调整</div>
<div class="a" style="left:842px;top:163.5px;width:1px;height:10px;background:#383838;"></div>
<div class="a" style="left:842px;top:160.5px;width:23px;height:15.5px;background:#535353;"></div>
<div class="t" style="left:847px;top:165px;font-size:6.5px;color:#ececec;">样式</div>
<svg style="left:948px;top:166.0px;" width="6" height="5" viewBox="0 0 6 5"><path d="M0 0.5H6M0 2.5H6M0 4.5H6" stroke="#a8a8a8" stroke-width="0.9"/></svg>
<div class="a" style="left:818px;top:277px;width:141px;height:2px;background:#3e3e3e;"></div>
<div class="a" style="left:818px;top:262px;width:141px;height:1px;background:#484848;"></div>
<div class="a" style="left:821.0px;top:185.0px;width:10px;height:10px;background:linear-gradient(45deg,#fff 42%,#d02020 42%,#d02020 58%,#fff 58%);"></div>
<div class="a" style="left:839.5px;top:185.0px;width:10px;height:10px;background:linear-gradient(#555,#444 70%,#3a3a3a);"></div>
<div class="a" style="left:858.0px;top:185.0px;width:10px;height:10px;background:linear-gradient(#5cc8f2,#2aa4e0);"></div>
<div class="a" style="left:876.5px;top:185.0px;width:10px;height:10px;background:linear-gradient(#8adcf8,#58c4f0);"></div>
<div class="a" style="left:895.0px;top:185.0px;width:10px;height:10px;background:linear-gradient(#f4f8ff,#cfe2f8);"></div>
<div class="a" style="left:913.5px;top:185.0px;width:10px;height:10px;background:linear-gradient(to right,#fff 0 25%,#e060c0 40%,#fff 55%,#d040b0 80%,#fff);"></div>
<div class="a" style="left:932.0px;top:185.0px;width:10px;height:10px;background:linear-gradient(to right,#e8d030 0 25%,#60b040 25% 45%,#f0f0f0 45% 60%,#d030a0 60% 85%,#8040a0 85%);"></div>
<div class="a" style="left:821.0px;top:203.5px;width:10px;height:10px;background:linear-gradient(to right,#f0d020,#fff 35%,#8030b0 65%,#111);"></div>
<div class="a" style="left:839.5px;top:203.5px;width:10px;height:10px;background:radial-gradient(circle at 35% 30%,#ffd0d0,#e02020 45%,#600 90%);"></div>
<div class="a" style="left:858.0px;top:203.5px;width:10px;height:10px;background:#5a5a5a;border:1px solid #626262"></div>
<div class="a" style="left:876.5px;top:203.5px;width:10px;height:10px;background:#5a5a5a;border:1px solid #626262"></div>
<div class="a" style="left:895.0px;top:203.5px;width:10px;height:10px;background:#5e5e5e;border:1px solid #626262"></div>
<div class="a" style="left:913.5px;top:203.5px;width:10px;height:10px;background:radial-gradient(circle,#f02090,#a00850 70%,#500030);"></div>
<div class="a" style="left:931.0px;top:202.5px;width:12px;height:12px;background:#4a4a4a;border:2px solid #d6d6c4;border-radius:1px"></div>
<div class="a" style="left:821.0px;top:222.0px;width:10px;height:10px;background:linear-gradient(#eee 0 25%,#111 45%);"></div>
<div class="a" style="left:839.5px;top:222.0px;width:10px;height:10px;background:linear-gradient(135deg,#60b8f8,#1870d0);"></div>
<div class="a" style="left:858.0px;top:222.0px;width:10px;height:10px;background:repeating-linear-gradient(to right,#d8d8d8 0 2px,#a8a8a8 2px 3px);"></div>
<div class="a" style="left:876.5px;top:222.0px;width:10px;height:10px;background:repeating-linear-gradient(#222 0 2px,#ddd 2px 3px);"></div>
<div class="a" style="left:895.0px;top:222.0px;width:10px;height:10px;background:#8a6c32;"></div>
<div class="a" style="left:913.5px;top:222.0px;width:10px;height:10px;background:linear-gradient(#5a3a18,#c09060 50%,#6a4a28);"></div>
<div class="a" style="left:932.0px;top:222.0px;width:10px;height:10px;background:repeating-linear-gradient(#c01050 0 3px,#400020 3px 4px);"></div>
<div class="a" style="left:821.0px;top:240.5px;width:10px;height:10px;background:linear-gradient(135deg,#e8c020 0 25%,#200 25% 50%,#e02020 50% 70%,#111 70%);"></div>
<div class="a" style="left:839.5px;top:240.5px;width:10px;height:10px;background:linear-gradient(to right,#c08000,#ffe020 50%,#c08000);"></div>
<div class="a" style="left:858.0px;top:240.5px;width:10px;height:10px;background:linear-gradient(#3090b0 0 40%,#60a040 40% 70%,#2a6a88 70%);"></div>
<div class="a" style="left:876.5px;top:240.5px;width:10px;height:10px;background:linear-gradient(#2a88d8,#e8f4ff 60%,#fff);"></div>
<div class="a" style="left:895.0px;top:240.5px;width:10px;height:10px;background:repeating-linear-gradient(#e8d040 0 3px,#3060a0 3px 5px);"></div>
<div class="a" style="left:913.5px;top:240.5px;width:10px;height:10px;background:repeating-linear-gradient(45deg,#d0d0d0 0 2px,#808080 2px 4px);"></div>
<div class="a" style="left:932.0px;top:240.5px;width:10px;height:10px;background:linear-gradient(#a070d0,#7040a0 70%,#201030);"></div>
<svg style="left:899px;top:265px;" width="9" height="9" viewBox="0 0 9 9"><circle cx="4.5" cy="4.5" r="3.6" fill="none" stroke="#8c8c8c" stroke-width="1"/><path d="M2 7L7 2" stroke="#8c8c8c" stroke-width="1"/></svg>
<svg style="left:917px;top:265px;" width="9" height="9" viewBox="0 0 9 9"><path d="M1 1H8V5.5L5.5 8H1Z" fill="none" stroke="#8c8c8c" stroke-width="1"/></svg>
<svg style="left:934px;top:265px;" width="8" height="9" viewBox="0 0 8 9"><path d="M0.5 2H7.5M2.5 2V0.8H5.5V2M1.3 2.5V8.5H6.7V2.5" fill="none" stroke="#8c8c8c" stroke-width="0.9"/></svg>
<div class="a" style="left:818px;top:278.5px;width:141px;height:15.5px;background:#424242;"></div>
<div class="a" style="left:818px;top:294.0px;width:141px;height:101.0px;background:#535353;"></div>
<div class="a" style="left:818px;top:278.5px;width:36px;height:15.5px;background:#535353;"></div>
<div class="t" style="left:823px;top:281.3px;font-size:6.5px;color:#ececec;">历史记录</div>
<div class="t" style="left:859.5px;top:281.3px;font-size:6.5px;color:#9e9e9e;">动作</div>
<div class="a" style="left:878px;top:281.5px;width:1px;height:10px;background:#383838;"></div>
<svg style="left:948px;top:284.0px;" width="6" height="5" viewBox="0 0 6 5"><path d="M0 0.5H6M0 2.5H6M0 4.5H6" stroke="#a8a8a8" stroke-width="0.9"/></svg>
<div class="a" style="left:818px;top:394px;width:141px;height:2px;background:#3e3e3e;"></div>
<div class="a" style="left:818px;top:299.3px;width:132px;height:12.8px;background:#4e4e4e;"></div>
<div class="a" style="left:818px;top:312.3px;width:132px;height:0.6px;background:#444;"></div>
<div class="a" style="left:820.5px;top:301.8px;width:6px;height:7px;background:transparent;border:1px solid #585858"></div>
<svg style="left:836px;top:301.3px;" width="8" height="9" viewBox="0 0 8 9"><path d="M0.5 0.5H5.5L7.5 2.5V8.5H0.5Z" fill="#d8d8d8"/><path d="M2 3.5H6M2 5H6M2 6.5H6" stroke="#666" stroke-width="0.6"/></svg>
<div class="t" style="left:852px;top:300.8px;font-size:6.8px;color:#d2d2d2;">设置形状图层填充</div>
<div class="a" style="left:818px;top:312.63px;width:132px;height:12.8px;background:#4e4e4e;"></div>
<div class="a" style="left:818px;top:325.63px;width:132px;height:0.6px;background:#444;"></div>
<div class="a" style="left:820.5px;top:315.13px;width:6px;height:7px;background:transparent;border:1px solid #585858"></div>
<svg style="left:836px;top:314.63px;" width="8" height="9" viewBox="0 0 8 9"><path d="M0.5 0.5H5.5L7.5 2.5V8.5H0.5Z" fill="#d8d8d8"/><path d="M2 3.5H6M2 5H6M2 6.5H6" stroke="#666" stroke-width="0.6"/></svg>
<div class="t" style="left:852px;top:314.13px;font-size:6.8px;color:#d2d2d2;">复制图层</div>
<div class="a" style="left:818px;top:325.96000000000004px;width:132px;height:12.8px;background:#4e4e4e;"></div>
<div class="a" style="left:818px;top:338.96000000000004px;width:132px;height:0.6px;background:#444;"></div>
<div class="a" style="left:820.5px;top:328.46000000000004px;width:6px;height:7px;background:transparent;border:1px solid #585858"></div>
<svg style="left:836px;top:327.96000000000004px;" width="8" height="9" viewBox="0 0 8 9"><path d="M0.5 0.5H5.5L7.5 2.5V8.5H0.5Z" fill="#d8d8d8"/><path d="M2 3.5H6M2 5H6M2 6.5H6" stroke="#666" stroke-width="0.6"/></svg>
<div class="t" style="left:852px;top:327.46000000000004px;font-size:6.8px;color:#d2d2d2;">更改定界框</div>
<div class="a" style="left:818px;top:339.29px;width:132px;height:12.8px;background:#4e4e4e;"></div>
<div class="a" style="left:818px;top:352.29px;width:132px;height:0.6px;background:#444;"></div>
<div class="a" style="left:820.5px;top:341.79px;width:6px;height:7px;background:transparent;border:1px solid #585858"></div>
<svg style="left:836px;top:341.29px;" width="8" height="9" viewBox="0 0 8 9"><path d="M0.5 0.5H5.5L7.5 2.5V8.5H0.5Z" fill="#d8d8d8"/><path d="M2 3.5H6M2 5H6M2 6.5H6" stroke="#666" stroke-width="0.6"/></svg>
<div class="t" style="left:852px;top:340.79px;font-size:6.8px;color:#d2d2d2;">更改定界框</div>
<div class="a" style="left:818px;top:352.62px;width:132px;height:12.8px;background:#4e4e4e;"></div>
<div class="a" style="left:818px;top:365.62px;width:132px;height:0.6px;background:#444;"></div>
<div class="a" style="left:820.5px;top:355.12px;width:6px;height:7px;background:transparent;border:1px solid #585858"></div>
<svg style="left:836px;top:354.62px;" width="8" height="9" viewBox="0 0 8 9"><path d="M0.5 0.5H5.5L7.5 2.5V8.5H0.5Z" fill="#d8d8d8"/><path d="M2 3.5H6M2 5H6M2 6.5H6" stroke="#666" stroke-width="0.6"/></svg>
<div class="t" style="left:852px;top:354.12px;font-size:6.8px;color:#d2d2d2;">顶对齐</div>
<div class="a" style="left:818px;top:365.95000000000005px;width:132px;height:12.8px;background:#6b6b6b;"></div>
<div class="a" style="left:818px;top:378.95000000000005px;width:132px;height:0.6px;background:#444;"></div>
<div class="a" style="left:820.5px;top:368.45000000000005px;width:6px;height:7px;background:transparent;border:1px solid #747474"></div>
<svg style="left:836px;top:367.95000000000005px;" width="8" height="9" viewBox="0 0 8 9"><path d="M0.5 0.5H5.5L7.5 2.5V8.5H0.5Z" fill="#d8d8d8"/><path d="M2 3.5H6M2 5H6M2 6.5H6" stroke="#666" stroke-width="0.6"/></svg>
<div class="t" style="left:852px;top:367.45000000000005px;font-size:6.8px;color:#f0f0f0;">水平居中对齐</div>
<div class="a" style="left:950px;top:298px;width:9px;height:82px;background:#4a4a4a;"></div>
<div class="a" style="left:951px;top:340px;width:7px;height:30px;background:#6c6c6c;border-radius:1px"></div>
<svg style="left:952px;top:302px;" width="5" height="3" viewBox="0 0 5 3"><path d="M0 3L2.5 0.5L5 3" stroke="#b0b0b0" fill="none" stroke-width="0.9"/></svg>
<svg style="left:952px;top:372px;" width="5" height="3" viewBox="0 0 5 3"><path d="M0 0L2.5 2.5L5 0" stroke="#b0b0b0" fill="none" stroke-width="0.9"/></svg>
<svg style="left:898px;top:382px;" width="10" height="9" viewBox="0 0 10 9"><rect x="3" y="0.5" width="6.5" height="5.5" fill="#d4d4d4"/><rect x="0.5" y="3" width="6" height="5.5" fill="#d4d4d4" stroke="#535353" stroke-width="0.6"/><path d="M2.2 5.8H5M3.6 4.4V7.2" stroke="#535353" stroke-width="0.8"/></svg>
<svg style="left:917px;top:382px;" width="10" height="9" viewBox="0 0 10 9"><path d="M0.5 2.5H2.5L3.5 1H6.5L7.5 2.5H9.5V8.5H0.5Z" fill="#d4d4d4"/><circle cx="5" cy="5.3" r="1.9" fill="#535353"/><circle cx="5" cy="5.3" r="0.9" fill="#d4d4d4"/></svg>
<svg style="left:934px;top:382px;" width="8" height="9" viewBox="0 0 8 9"><path d="M0.5 2H7.5M2.5 2V0.8H5.5V2" fill="none" stroke="#d4d4d4" stroke-width="0.9"/><path d="M1.2 2.8H6.8V8.6H1.2Z" fill="#d4d4d4"/></svg>
<div class="a" style="left:818px;top:396px;width:141px;height:15.5px;background:#424242;"></div>
<div class="a" style="left:818px;top:411.5px;width:141px;height:126.5px;background:#535353;"></div>
<div class="a" style="left:818px;top:396px;width:24px;height:15.5px;background:#535353;"></div>
<div class="t" style="left:823px;top:399.2px;font-size:6.5px;color:#ececec;">图层</div>
<div class="t" style="left:847.5px;top:399.2px;font-size:6.5px;color:#9e9e9e;">通道</div>
<div class="a" style="left:866px;top:399px;width:1px;height:10px;background:#383838;"></div>
<div class="t" style="left:871.5px;top:399.2px;font-size:6.5px;color:#9e9e9e;">路径</div>
<div class="a" style="left:890px;top:399px;width:1px;height:10px;background:#383838;"></div>
<svg style="left:948px;top:401.5px;" width="6" height="5" viewBox="0 0 6 5"><path d="M0 0.5H6M0 2.5H6M0 4.5H6" stroke="#a8a8a8" stroke-width="0.9"/></svg>
<div class="a" style="left:821px;top:416px;width:49px;height:12px;background:#484848;border:1px solid #404040;border-radius:1px"></div>
<svg style="left:823px;top:418px;" width="7" height="7" viewBox="0 0 7 7"><circle cx="4" cy="3" r="2.2" fill="none" stroke="#d4d4d4" stroke-width="1"/><path d="M2.5 4.5L0.5 6.5" stroke="#d4d4d4" stroke-width="1.1"/></svg>
<div class="t" style="left:832px;top:417px;font-size:6.8px;color:#dcdcdc;">类型</div>
<svg style="left:863px;top:421px;" width="4" height="3" viewBox="0 0 4 3"><path d="M0 0L2 2L4 0" stroke="#a8a8a8" fill="none" stroke-width="0.9"/></svg>
<svg style="left:877px;top:418px;" width="9" height="8" viewBox="0 0 9 8"><rect x="0.5" y="0.5" width="8" height="7" fill="none" stroke="#d4d4d4" stroke-width="1"/><path d="M1.5 6.5L3.5 4L5 5.5L6 4.5L7.5 6.5Z" fill="#d4d4d4"/></svg>
<svg style="left:892px;top:418px;" width="8" height="8" viewBox="0 0 8 8"><circle cx="4" cy="4" r="3.4" fill="none" stroke="#d4d4d4" stroke-width="1"/><path d="M4 0.6A3.4 3.4 0 0 1 4 7.4Z" fill="#d4d4d4"/></svg>
<div class="t" style="left:906px;top:416px;font-family:'Liberation Serif',serif;font-weight:bold;font-size:10px;line-height:11px;color:#d4d4d4">T</div>
<svg style="left:919px;top:418px;" width="9" height="8" viewBox="0 0 9 8"><rect x="1.5" y="1.5" width="6" height="5" fill="none" stroke="#d4d4d4" stroke-width="1"/><rect x="0" y="0" width="2.4" height="2.4" fill="#d4d4d4"/><rect x="6.6" y="0" width="2.4" height="2.4" fill="#d4d4d4"/><rect x="0" y="5.6" width="2.4" height="2.4" fill="#d4d4d4"/><rect x="6.6" y="5.6" width="2.4" height="2.4" fill="#d4d4d4"/></svg>
<svg style="left:934px;top:417px;" width="7" height="9" viewBox="0 0 7 9"><path d="M0.5 0.5H4.5L6.5 2.5V8.5H0.5Z" fill="#d4d4d4"/><path d="M4.5 0.5V2.5H6.5" fill="none" stroke="#535353" stroke-width="0.6"/></svg>
<div class="a" style="left:952px;top:416px;width:4px;height:5px;background:#e8e8e8;border-radius:2px"></div>
<div class="t" style="left:825px;top:433px;font-size:6.5px;color:#dcdcdc;">正常</div>
<svg style="left:881px;top:437px;" width="4" height="3" viewBox="0 0 4 3"><path d="M0 0L2 2L4 0" stroke="#a8a8a8" fill="none" stroke-width="0.9"/></svg>
<div class="t" style="left:892px;top:433px;font-size:6.8px;color:#b8b8b8;">不透明度:</div>
<div class="t" style="left:927px;top:433px;font-size:6.8px;color:#dcdcdc;">100%</div>
<svg style="left:951px;top:437px;" width="4" height="3" viewBox="0 0 4 3"><path d="M0 0L2 2L4 0" stroke="#a8a8a8" fill="none" stroke-width="0.9"/></svg>
<div class="t" style="left:822px;top:449px;font-size:7px;color:#a8a8a8;">锁定:</div>
<div class="t" style="left:908px;top:449px;font-size:7px;color:#a8a8a8;">填充:</div>
<div class="t" style="left:927px;top:449px;font-size:6.8px;color:#c8c8c8;">100%</div>
<svg style="left:843px;top:450px;" width="6" height="6" viewBox="0 0 6 6"><rect x="0.5" y="0.5" width="5" height="5" fill="none" stroke="#aaa" stroke-width="0.8" stroke-dasharray="1 1"/></svg>
<svg style="left:855px;top:450px;" width="6" height="6" viewBox="0 0 6 6"><path d="M0.5 5.5L4.5 1.5" stroke="#aaa" stroke-width="1.2"/></svg>
<svg style="left:867px;top:450px;" width="6" height="6" viewBox="0 0 6 6"><path d="M3 0V6M0 3H6" stroke="#aaa" stroke-width="0.9"/></svg>
<svg style="left:879px;top:450px;" width="6" height="6" viewBox="0 0 6 6"><rect x="0.5" y="0.5" width="5" height="5" fill="none" stroke="#aaa" stroke-width="0.8"/></svg>
<svg style="left:890px;top:449px;" width="6" height="7" viewBox="0 0 6 7"><rect x="0.5" y="3" width="5" height="3.6" fill="#ccc"/><path d="M1.5 3V1.8Q1.5 0.5 3 0.5Q4.5 0.5 4.5 1.8V3" fill="none" stroke="#ccc" stroke-width="0.9"/></svg>
<div class="a" style="left:834px;top:462px;width:116px;height:1px;background:#484848;"></div>
<div class="a" style="left:834px;top:487px;width:116px;height:17.5px;background:#6a6a6a;"></div>
<div class="a" style="left:834px;top:505px;width:116px;height:1px;background:#484848;"></div>
<div class="a" style="left:818px;top:526px;width:141px;height:1px;background:#444;"></div>
<div class="a" style="left:837px;top:465.5px;width:16px;height:16px;background:#fff;border:1px solid #999"></div>
<div class="a" style="left:840.3px;top:469.0px;width:8px;height:8px;background:#b020e8;border-radius:50%"></div>
<div class="a" style="left:837px;top:487px;width:16px;height:16px;background:#fff;border:1px solid #999"></div>
<div class="a" style="left:840.3px;top:490.5px;width:8px;height:8px;background:#b020e8;border-radius:50%"></div>
<div class="a" style="left:840.3px;top:469px;width:8px;height:8px;background:#b322ea;border-radius:50%;z-index:41;opacity:.75"></div>
<div class="a" style="left:837px;top:509px;width:18px;height:12px;background:#fff;border:1px solid #aaa"></div>
<div class="t" style="left:862px;top:469px;font-size:6.8px;color:#dcdcdc;">椭圆 1 拷贝</div>
<div class="t" style="left:862px;top:491px;font-size:6.8px;color:#f0f0f0;">椭圆 1</div>
<div class="t" style="left:862px;top:513px;font-size:6.8px;color:#dcdcdc;">背景</div>
<svg style="left:933px;top:514px;" width="6" height="7" viewBox="0 0 6 7"><rect x="0.5" y="3" width="5" height="3.6" fill="#ccc"/><path d="M1.5 3V1.8Q1.5 0.5 3 0.5Q4.5 0.5 4.5 1.8V3" fill="none" stroke="#ccc" stroke-width="0.9"/></svg>
<div class="a" style="left:950px;top:462px;width:9px;height:64px;background:#4a4a4a;"></div>
<div class="a" style="left:951px;top:470px;width:7px;height:36px;background:#6c6c6c;border-radius:1px"></div>
<svg style="left:840px;top:525px;" width="10" height="6" viewBox="0 0 10 6"><circle cx="2.8" cy="3" r="2" fill="none" stroke="#d4d4d4" stroke-width="1"/><circle cx="7.2" cy="3" r="2" fill="none" stroke="#d4d4d4" stroke-width="1"/></svg>
<div class="t" style="left:856px;top:523px;font-size:8px;font-style:italic;color:#909090;font-family:'Liberation Serif',serif">fx</div>
<svg style="left:871px;top:524px;" width="9" height="8" viewBox="0 0 9 8"><rect x="0.5" y="0.5" width="8" height="7" fill="#d4d4d4"/><circle cx="4.5" cy="4" r="2" fill="#535353"/></svg>
<svg style="left:888px;top:524px;" width="8" height="8" viewBox="0 0 8 8"><circle cx="4" cy="4" r="3.4" fill="none" stroke="#d4d4d4" stroke-width="1"/><path d="M4 0.6A3.4 3.4 0 0 1 4 7.4Z" fill="#d4d4d4"/></svg>
<svg style="left:902px;top:524px;" width="10" height="8" viewBox="0 0 10 8"><path d="M0.5 1H4L5 2.2H9.5V7.5H0.5Z" fill="#d4d4d4"/></svg>
<svg style="left:918px;top:524px;" width="9" height="8" viewBox="0 0 9 8"><path d="M0.5 0.5H8.5V5L6 7.5H0.5Z" fill="none" stroke="#d4d4d4" stroke-width="1"/><path d="M8.5 5H6V7.5" fill="none" stroke="#d4d4d4" stroke-width="0.8"/></svg>
<svg style="left:934px;top:523px;" width="8" height="9" viewBox="0 0 8 9"><path d="M0.5 2H7.5M2.5 2V0.8H5.5V2" fill="none" stroke="#d4d4d4" stroke-width="0.9"/><path d="M1.2 2.8H6.8V8.6H1.2Z" fill="#d4d4d4"/></svg><div class="a" style="left:626px;top:84px;width:168px;height:220px;background:#3a3a3a;"></div>
<div class="a" style="left:627px;top:85px;width:166px;height:16px;background:#424242;"></div>
<div class="a" style="left:627px;top:101px;width:166px;height:196px;background:#535353;"></div>
<div class="a" style="left:627px;top:297px;width:166px;height:6px;background:#5a5a5a;"></div>
<div class="a" style="left:627px;top:85px;width:25px;height:16px;background:#535353;"></div>
<div class="t" style="left:632px;top:89.7px;font-size:6.6px;color:#ececec;">属性</div>
<svg style="left:769px;top:91px;" width="6" height="5" viewBox="0 0 6 5"><path d="M0.5 0.5L2.5 2.5L0.5 4.5M3.5 0.5L5.5 2.5L3.5 4.5" stroke="#d8d8d8" fill="none" stroke-width="1"/></svg>
<div class="a" style="left:779px;top:89px;width:1px;height:9px;background:#5e5e5e;"></div>
<svg style="left:784px;top:91px;" width="6" height="5" viewBox="0 0 6 5"><path d="M0 0.5H6M0 2.5H6M0 4.5H6" stroke="#a8a8a8" stroke-width="0.9"/></svg>
<div class="a" style="left:784px;top:101px;width:9px;height:196px;background:#4e4e4e;"></div>
<div class="a" style="left:785px;top:125px;width:8px;height:158px;background:#5e5e5e;"></div>
<div class="a" style="left:635px;top:107px;width:11px;height:12px;background:#303030;"></div>
<svg style="left:637px;top:109px;" width="7" height="8" viewBox="0 0 7 8"><rect x="1" y="1.2" width="5" height="5.6" fill="none" stroke="#d4d4d4" stroke-width="1"/><rect x="0" y="0.2" width="2" height="2" fill="#d4d4d4"/><rect x="5" y="0.2" width="2" height="2" fill="#d4d4d4"/><rect x="0" y="5.8" width="2" height="2" fill="#d4d4d4"/><rect x="5" y="5.8" width="2" height="2" fill="#d4d4d4"/></svg>
<div class="t" style="left:652px;top:108px;font-size:6.8px;color:#c8c8c8;">实时形状属性</div>
<div class="a" style="left:631px;top:124px;width:152px;height:1px;background:#474747;"></div>
<svg style="left:632px;top:129px;" width="5" height="3" viewBox="0 0 5 3"><path d="M0 0L2.5 2.5L5 0" stroke="#b0b0b0" fill="none" stroke-width="0.9"/></svg>
<div class="t" style="left:642px;top:126px;font-size:6.8px;color:#dcdcdc;">边框</div>
<div class="t" style="left:633px;top:141px;font-size:6.5px;color:#9a9a9a;">W:</div>
<div class="t" style="left:646px;top:140px;font-size:6.8px;color:#d8d8d8;">99 像素</div>
<div class="a" style="left:645px;top:151px;width:41px;height:1px;background:#6a6a6a;"></div>
<svg style="left:693px;top:142px;" width="8" height="5" viewBox="0 0 8 5"><circle cx="2.4" cy="2.5" r="1.7" fill="none" stroke="#c0c0c0" stroke-width="0.9"/><circle cx="5.6" cy="2.5" r="1.7" fill="none" stroke="#c0c0c0" stroke-width="0.9"/></svg>
<div class="t" style="left:707px;top:141px;font-size:6.5px;color:#9a9a9a;">H:</div>
<div class="t" style="left:719px;top:140px;font-size:6.8px;color:#d8d8d8;">99 像素</div>
<div class="a" style="left:718px;top:151px;width:42px;height:1px;background:#6a6a6a;"></div>
<div class="t" style="left:634px;top:158px;font-size:6.5px;color:#9a9a9a;">X:</div>
<div class="t" style="left:646px;top:157px;font-size:6.8px;color:#d8d8d8;">30 像素</div>
<div class="a" style="left:645px;top:168px;width:41px;height:1px;background:#6a6a6a;"></div>
<div class="t" style="left:708px;top:158px;font-size:6.5px;color:#9a9a9a;">Y:</div>
<div class="t" style="left:719px;top:157px;font-size:6.8px;color:#d8d8d8;">58 像素</div>
<div class="a" style="left:718px;top:168px;width:42px;height:1px;background:#6a6a6a;"></div>
<svg style="left:632px;top:172px;" width="5" height="3" viewBox="0 0 5 3"><path d="M0 0L2.5 2.5L5 0" stroke="#b0b0b0" fill="none" stroke-width="0.9"/></svg>
<div class="t" style="left:642px;top:169px;font-size:6.8px;color:#dcdcdc;">形状细节</div>
<div class="a" style="left:633px;top:181px;width:17px;height:11px;background:#c40cf2;border:1px solid #3a3a3a"></div>
<div class="a" style="left:653px;top:181px;width:15px;height:11px;background:#f4f4f4;border:1px solid #3a3a3a"></div>
<svg style="left:656px;top:183px;" width="9" height="7" viewBox="0 0 9 7"><path d="M0.5 6H5V3H8.5" fill="none" stroke="#222" stroke-width="1.2"/></svg>
<div class="t" style="left:674px;top:182px;font-size:6.8px;color:#d8d8d8;">3 像素</div>
<svg style="left:712px;top:186px;" width="5" height="3" viewBox="0 0 5 3"><path d="M0 0L2.5 2.5L5 0" stroke="#b0b0b0" fill="none" stroke-width="0.9"/></svg>
<div class="a" style="left:673px;top:192px;width:45px;height:1px;background:#5e5e5e;"></div>
<div class="a" style="left:721px;top:181px;width:39px;height:11px;background:#484848;border:1px solid #404040"></div>
<div class="a" style="left:724px;top:185.5px;width:27px;height:1.3px;background:#f0f0f0;"></div>
<svg style="left:753px;top:186px;" width="5" height="3" viewBox="0 0 5 3"><path d="M0 0L2.5 2.5L5 0" stroke="#b0b0b0" fill="none" stroke-width="0.9"/></svg>
<div class="a" style="left:633px;top:199px;width:35px;height:10px;background:#484848;border:1px solid #404040"></div>
<svg style="left:660px;top:203px;" width="5" height="3" viewBox="0 0 5 3"><path d="M0 0L2.5 2.5L5 0" stroke="#b0b0b0" fill="none" stroke-width="0.9"/></svg>
<div class="a" style="left:672px;top:199px;width:36px;height:10px;background:#484848;border:1px solid #404040"></div>
<svg style="left:700px;top:203px;" width="5" height="3" viewBox="0 0 5 3"><path d="M0 0L2.5 2.5L5 0" stroke="#b0b0b0" fill="none" stroke-width="0.9"/></svg>
<div class="a" style="left:713px;top:199px;width:47px;height:10px;background:#484848;border:1px solid #404040"></div>
<svg style="left:752px;top:203px;" width="5" height="3" viewBox="0 0 5 3"><path d="M0 0L2.5 2.5L5 0" stroke="#b0b0b0" fill="none" stroke-width="0.9"/></svg>
<svg style="left:637px;top:201px;" width="6" height="6" viewBox="0 0 6 6"><circle cx="3" cy="3" r="2" fill="none" stroke="#d4d4d4" stroke-width="1.3"/></svg>
<svg style="left:677px;top:200px;" width="7" height="8" viewBox="0 0 7 8"><path d="M1 1H5V3H3V5H5V7H1Z" fill="#d4d4d4"/><path d="M4 3H6.5V5H4" fill="#d4d4d4"/></svg>
<svg style="left:717px;top:200px;" width="8" height="8" viewBox="0 0 8 8"><path d="M1 0.5V7.5" stroke="#d4d4d4" stroke-width="1.2"/><path d="M1 1H7V5H4L1 7Z" fill="#d4d4d4"/></svg>
<svg style="left:632px;top:214px;" width="5" height="3" viewBox="0 0 5 3"><path d="M0 0L2.5 2.5L5 0" stroke="#b0b0b0" fill="none" stroke-width="0.9"/></svg>
<div class="t" style="left:642px;top:211px;font-size:6.8px;color:#dcdcdc;">路径操作</div>
<div class="a" style="left:659px;top:223px;width:17px;height:13px;background:#363636;border-radius:1px"></div>
<div class="a" style="left:678px;top:223px;width:17px;height:13px;background:#414141;border-radius:1px"></div>
<div class="a" style="left:698px;top:223px;width:17px;height:13px;background:#414141;border-radius:1px"></div>
<div class="a" style="left:716px;top:223px;width:17px;height:13px;background:#414141;border-radius:1px"></div>
<svg style="left:663px;top:225px;" width="9" height="9" viewBox="0 0 9 9"><rect x="0.5" y="0.5" width="5.5" height="5.5" fill="#d4d4d4"/><rect x="3" y="3" width="5.5" height="5.5" fill="#d4d4d4" stroke="#363636" stroke-width="0.5"/></svg>
<svg style="left:682px;top:225px;" width="9" height="9" viewBox="0 0 9 9"><rect x="0.5" y="0.5" width="5.5" height="5.5" fill="#d4d4d4"/><rect x="3" y="3" width="5.5" height="5.5" fill="#414141" stroke="#d4d4d4" stroke-width="0.8"/></svg>
<svg style="left:702px;top:225px;" width="9" height="9" viewBox="0 0 9 9"><rect x="0.5" y="0.5" width="5.5" height="5.5" fill="none" stroke="#d4d4d4" stroke-width="0.8"/><rect x="3" y="3" width="5.5" height="5.5" fill="none" stroke="#d4d4d4" stroke-width="0.8"/><rect x="3" y="3" width="3" height="3" fill="#d4d4d4"/></svg>
<svg style="left:720px;top:225px;" width="9" height="9" viewBox="0 0 9 9"><rect x="0.5" y="0.5" width="5.5" height="5.5" fill="#d4d4d4"/><rect x="3" y="3" width="5.5" height="5.5" fill="#d4d4d4"/><rect x="3.2" y="3.2" width="2.6" height="2.6" fill="#414141"/></svg>
<svg style="left:830px;top:428px;z-index:40;opacity:.72" width="52" height="64" viewBox="0 0 52 64">
<ellipse cx="18.4" cy="12.5" rx="5.9" ry="8.3" fill="#ffffff"/>
<ellipse cx="34" cy="13" rx="5.9" ry="8.3" fill="#ffffff"/>
<ellipse cx="5.6" cy="25" rx="6" ry="7.5" fill="#ffffff" transform="rotate(-10 5.6 25)"/>
<ellipse cx="43.8" cy="29.5" rx="5.8" ry="8" fill="#ffffff" transform="rotate(10 43.8 29.5)"/>
<path d="M24 27Q30 27 34 33Q38 38.5 43 42.5Q48.5 47.5 46 54Q43 59 35 57.7Q29 56.6 24.5 56.6Q20 56.6 14 57.7Q5.5 59 3.2 54Q1 47.5 6 42.5Q10.5 38.5 14 33Q18 27 24 27Z" fill="#ffffff"/>
</svg>
<svg style="left:830px;top:428px;z-index:41" width="52" height="64" viewBox="0 0 52 64"><text x="15.5" y="55" style="font-family:'Liberation Sans',sans-serif;font-weight:700" font-size="26" fill="#4c4c4c" stroke="#4c4c4c" stroke-width="0.9" stroke-linejoin="round" textLength="23" lengthAdjust="spacingAndGlyphs">du</text></svg>
<div class="t" style="left:883px;top:456px;font-size:28.8px;line-height:32px;font-weight:900;color:#efefef;z-index:40;font-family:'Noto Sans CJK SC','Liberation Sans',sans-serif;letter-spacing:0px">经验</div>
<div class="a" style="left:883px;top:477.5px;width:60px;height:1px;background:rgba(83,83,83,.85);z-index:41"></div>
<div class="a" style="left:883px;top:481px;width:60px;height:1px;background:rgba(83,83,83,.85);z-index:41"></div>
<div class="a" style="left:883px;top:484.5px;width:60px;height:1px;background:rgba(83,83,83,.85);z-index:41"></div>
<div class="t" style="left:832px;top:491px;font-size:20.5px;line-height:24px;color:#e4f1fb;z-index:42;letter-spacing:0.2px;text-shadow:0 0 1px #5aa0d8">n.baidu.com</div>
<div class="a" style="left:832.5px;top:452.5px;width:126.5px;height:55px;background:transparent;border:2.4px solid #2d78ba;z-index:39"></div>
</body></html>
